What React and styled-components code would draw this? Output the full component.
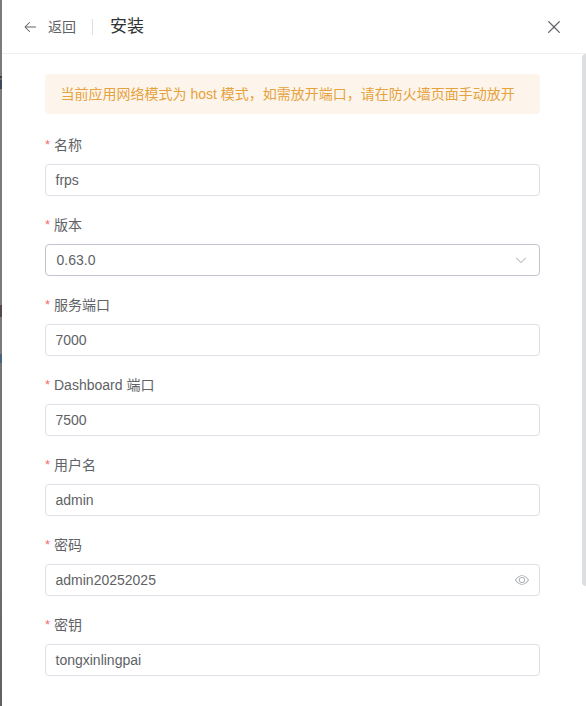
import styled, { createGlobalStyle } from "styled-components";

const fields = [
  { label: "名称", value: "frps" },
  { label: "版本", value: "0.63.0", type: "select" },
  { label: "服务端口", value: "7000" },
  { label: "Dashboard 端口", value: "7500" },
  { label: "用户名", value: "admin" },
  { label: "密码", value: "admin20252025", type: "password" },
  { label: "密钥", value: "tongxinlingpai" },
];

function BackIcon() {
  return (
    <Icon viewBox="0 0 1024 1024" $size={16}>
      <path d="M224 480h640a32 32 0 1 1 0 64H224a32 32 0 0 1 0-64" />
      <path d="m237.248 512 265.408 265.344a32 32 0 0 1-45.312 45.312l-288-288a32 32 0 0 1 0-45.312l288-288a32 32 0 1 1 45.312 45.312z" />
    </Icon>
  );
}

function CloseIcon() {
  return (
    <Icon viewBox="0 0 1024 1024" $size={20}>
      <path d="M764.288 214.592 512 466.88 259.712 214.592a31.936 31.936 0 0 0-45.12 45.12L466.752 512 214.528 764.224a31.936 31.936 0 1 0 45.12 45.184L512 557.184l252.288 252.288a31.936 31.936 0 0 0 45.12-45.12L557.12 512.064l252.288-252.352a31.936 31.936 0 1 0-45.12-45.184z" />
    </Icon>
  );
}

function ArrowDownIcon() {
  return (
    <Icon viewBox="0 0 1024 1024" $size={14}>
      <path d="M831.872 340.864 512 652.672 192.128 340.864a30.592 30.592 0 0 0-42.752 0 29.12 29.12 0 0 0 0 41.6L489.664 714.24a32 32 0 0 0 44.672 0l340.288-331.712a29.12 29.12 0 0 0 0-41.728 30.592 30.592 0 0 0-42.752 0z" />
    </Icon>
  );
}

function ViewIcon() {
  return (
    <Icon viewBox="0 0 1024 1024" $size={14}>
      <path d="M512 160c320 0 512 352 512 352S832 864 512 864 0 512 0 512s192-352 512-352m0 64c-225.28 0-384.128 208.064-436.8 288 52.608 79.872 211.456 288 436.8 288 225.28 0 384.128-208.064 436.8-288-52.608-79.872-211.456-288-436.8-288m0 64a224 224 0 1 1 0 448 224 224 0 0 1 0-448m0 64a160.19 160.19 0 0 0-160 160c0 88.192 71.744 160 160 160s160-71.808 160-160-71.744-160-160-160" />
    </Icon>
  );
}

export default function App() {
  return (
    <>
      <GlobalStyle />
      <Page>
        <Drawer>
          <Header>
            <BackButton type="button">
              <BackIcon />
              返回
            </BackButton>
            <Divider />
            <Title>安装</Title>
            <CloseButton type="button" aria-label="关闭">
              <CloseIcon />
            </CloseButton>
          </Header>
          <Body>
            <Form>
              <Alert>
                当前应用网络模式为 host 模式，如需放开端口，请在防火墙页面手动放开
              </Alert>
              {fields.map(({ label, value, type }) => (
                <FormItem key={label}>
                  <Label>
                    <Required>*</Required>
                    {label}
                  </Label>
                  <Control $select={type === "select"}>
                    <span>{value}</span>
                    {type === "select" && <ArrowDownIcon />}
                    {type === "password" && <ViewIcon />}
                  </Control>
                </FormItem>
              ))}
            </Form>
            <ScrollThumb />
          </Body>
        </Drawer>
      </Page>
    </>
  );
}

const GlobalStyle = createGlobalStyle`
  * {
    box-sizing: border-box;
  }

  body {
    margin: 0;
    overflow: hidden;
    font-family: "Liberation Sans", "Noto Sans CJK SC", sans-serif;
    font-size: 14px;
    color: #606266;
  }
`;

const Icon = styled.svg`
  width: ${({ $size }) => $size}px;
  height: ${({ $size }) => $size}px;
  flex-shrink: 0;
  fill: currentColor;
`;

const Page = styled.div`
  height: 706px;
  padding-left: 2px;
  background: linear-gradient(
    #7b7b7d 0 76px,
    #3c4148 76px 78px,
    #68696b 78px 80px,
    #3b4959 80px 89px,
    #7b7b7d 89px 305px,
    #55484d 305px 317px,
    #7b7b7d 317px 354px,
    #4b637c 354px 363px,
    #747476 363px 530px,
    #606062 706px
  );
`;

const Drawer = styled.main`
  display: flex;
  flex-direction: column;
  height: 100%;
  background: #fff;
`;

const Header = styled.header`
  display: flex;
  align-items: center;
  height: 54px;
  padding: 0 22px 0 20px;
  border-bottom: 1px solid #eeeff1;
`;

const BackButton = styled.button`
  display: flex;
  align-items: center;
  gap: 10px;
  padding: 0;
  border: none;
  background: none;
  font: inherit;
  line-height: 20px;
  color: #606266;
`;

const Divider = styled.div`
  width: 1px;
  height: 16px;
  margin: 0 17px 0 16px;
  background: #dcdfe6;
`;

const Title = styled.h1`
  margin: 0;
  font-size: 17px;
  font-weight: 400;
  line-height: 24px;
  color: #303133;
`;

const CloseButton = styled.button`
  display: flex;
  margin-left: auto;
  padding: 0;
  border: none;
  background: none;
  color: #606266;
`;

const Body = styled.div`
  display: flex;
  flex: 1;
  justify-content: space-between;
  min-height: 0;
  padding-left: 43px;
`;

const Form = styled.form`
  width: 495px;
  padding-top: 20px;
`;

const Alert = styled.div`
  height: 40px;
  margin-bottom: 20px;
  padding: 0 15.5px;
  border-radius: 4px;
  background: #fdf5ec;
  color: #e6a23c;
  line-height: 40px;
  white-space: nowrap;
`;

const FormItem = styled.div`
  margin-bottom: 18px;
`;

const Label = styled.label`
  display: block;
  height: 22px;
  margin-bottom: 8px;
  line-height: 22px;
`;

const Required = styled.span`
  display: inline-block;
  width: 9px;
  font-size: 13px;
  line-height: 1;
  vertical-align: 1px;
  color: #f56c6c;
`;

const Control = styled.div`
  display: flex;
  align-items: center;
  justify-content: space-between;
  height: 32px;
  padding: 0 ${({ $select }) => ($select ? 11 : 10)}px 0 ${({ $select }) => ($select ? 10.5 : 9.5)}px;
  border: 1px solid ${({ $select }) => ($select ? "#c0c4cc" : "#dcdfe6")};
  border-radius: 4px;

  svg {
    color: #a8abb2;
  }
`;

const ScrollThumb = styled.div`
  width: 4px;
  height: 532px;
  border-radius: 4px 0 0 4px;
  background: #dddee0;
`;
